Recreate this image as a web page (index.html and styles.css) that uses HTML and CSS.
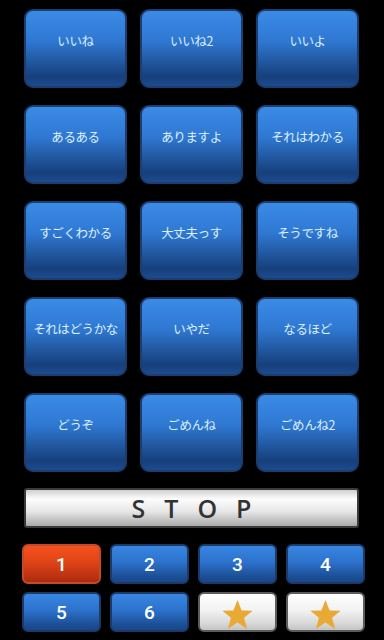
FILE: index.html
```html
<!DOCTYPE html>
<html lang="ja">
<head>
  <meta charset="UTF-8">
  <meta name="viewport" content="width=device-width, initial-scale=1.0">
  <title>Voice Board</title>
  <link rel="stylesheet" href="styles.css">
</head>
<body>

<div class="board">
  <div class="grid">
    <div class="voice">いいね</div>
    <div class="voice">いいね2</div>
    <div class="voice">いいよ</div>
    <div class="voice">あるある</div>
    <div class="voice">ありますよ</div>
    <div class="voice">それはわかる</div>
    <div class="voice">すごくわかる</div>
    <div class="voice">大丈夫っす</div>
    <div class="voice">そうですね</div>
    <div class="voice">それはどうかな</div>
    <div class="voice">いやだ</div>
    <div class="voice">なるほど</div>
    <div class="voice">どうぞ</div>
    <div class="voice">ごめんね</div>
    <div class="voice">ごめんね2</div>
  </div>

  <div class="stop">STOP</div>

  <div class="pages">
    <div class="page active">1</div>
    <div class="page">2</div>
    <div class="page">3</div>
    <div class="page">4</div>
    <div class="page">5</div>
    <div class="page">6</div>
    <div class="page fav">
      <svg viewBox="0 0 24 24" width="33" height="33"><polygon points="12,1.5 15,9 23,9.3 16.8,14.3 19,22.5 12,17.8 5,22.5 7.2,14.3 1,9.3 9,9" fill="#e9a935"/></svg>
    </div>
    <div class="page fav">
      <svg viewBox="0 0 24 24" width="33" height="33"><polygon points="12,1.5 15,9 23,9.3 16.8,14.3 19,22.5 12,17.8 5,22.5 7.2,14.3 1,9.3 9,9" fill="#e9a935"/></svg>
    </div>
  </div>
</div>

</body>
</html>
```

FILE: styles.css
```css
body {
  margin: 0;
  padding: 0;
  background-color: #000;
  font-family: "Noto Sans CJK JP", "Noto Sans", sans-serif;
}
.board {
  width: 384px;
  height: 640px;
  overflow: hidden;
}
.grid {
  display: grid;
  grid-template-columns: repeat(3, 103px);
  grid-auto-rows: 79px;
  column-gap: 13px;
  row-gap: 17px;
  padding: 9px 0 0 24px;
}
.voice {
  box-sizing: border-box;
  border: 2px solid #1b3e70;
  border-radius: 9px;
  background: linear-gradient(#3b8be6 0%, #2f78d2 40%, #21579f 68%, #173f7b 88%, #1d4b8e 100%);
  color: #dcf0ff;
  font-size: 12.5px;
  line-height: 18px;
  letter-spacing: -0.4px;
  text-align: center;
  padding-top: 21px;
}
.stop {
  box-sizing: border-box;
  width: 335px;
  height: 40px;
  margin: 16px 0 0 24px;
  border: 2px solid #3a3a3a;
  border-radius: 3px;
  background: linear-gradient(#cfcfcf 0%, #fdfdfd 25%, #e6e6e6 60%, #a9a9a9 100%);
  color: #333;
  font-family: "Open Sans", sans-serif;
  font-weight: 600;
  font-size: 25px;
  line-height: 36px;
  letter-spacing: 19px;
  text-indent: 19px;
  text-align: center;
}
.pages {
  display: grid;
  grid-template-columns: repeat(4, 79px);
  grid-auto-rows: 40px;
  column-gap: 9px;
  row-gap: 8px;
  padding: 16px 0 0 22px;
}
.page {
  box-sizing: border-box;
  display: flex;
  align-items: center;
  justify-content: center;
  border: 2px solid #1a3b6a;
  border-radius: 6px;
  background: linear-gradient(#3886e2 0%, #2c72cc 45%, #1c4f95 85%, #1a4688 100%);
  color: #fff;
  font-family: Roboto, sans-serif;
  font-weight: 500;
  font-size: 19px;
}
.page.active {
  border-color: #c4482a;
  background: linear-gradient(#f4521c 0%, #e24618 40%, #bb3210 85%, #a82a0e 100%);
}
.page.fav {
  border-color: #5c5c5c;
  background: linear-gradient(#ffffff 0%, #f2f2f2 45%, #d9d9d9 80%, #c4c4c4 100%);
}
.page.fav svg {
  margin-top: 4px;
}
```
